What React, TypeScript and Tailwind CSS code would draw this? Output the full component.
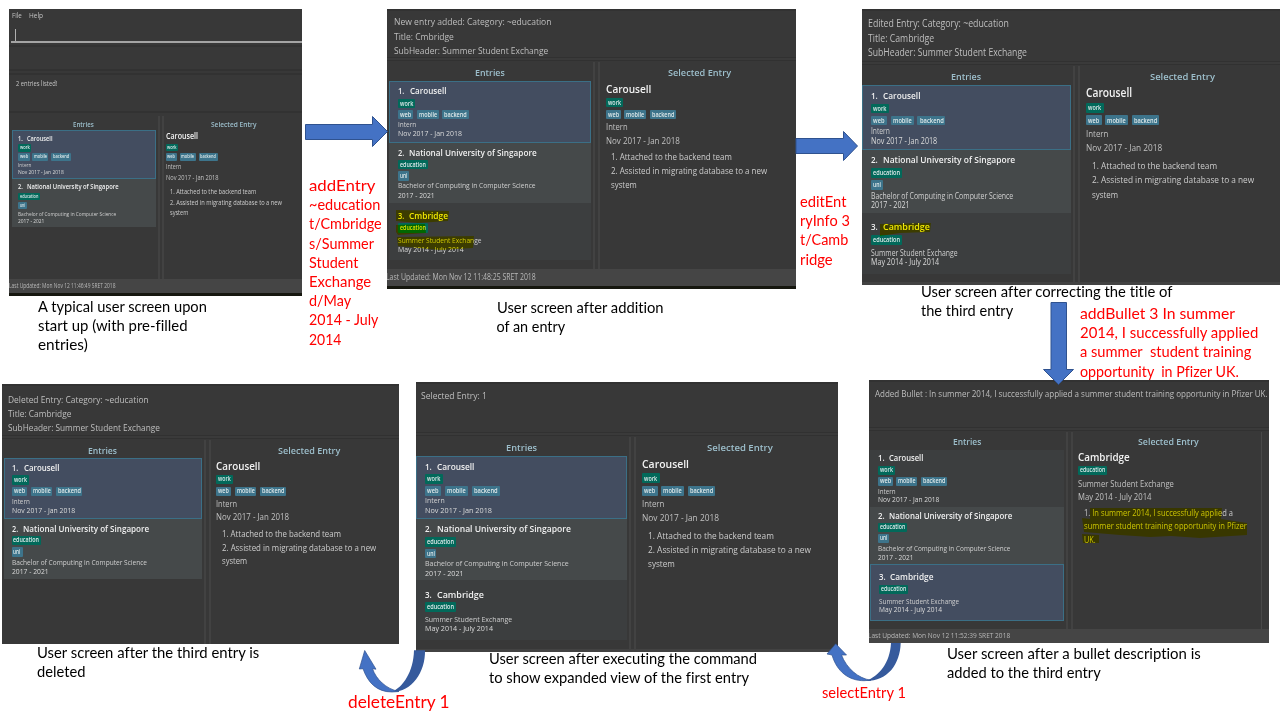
import { createContext, useContext, useLayoutEffect, useRef, useState } from "react";
import type { ReactNode } from "react";

/* Horizontal text scale of the window a label sits in. */
const TextScale = createContext(1);

/* One line of text, condensed or widened to fill a given width. */
function Fit({ w, children, className = "" }: { w: number; children: string; className?: string }) {
  const k = useContext(TextScale);
  const ref = useRef<HTMLSpanElement>(null);
  const [sx, setSx] = useState(1);
  useLayoutEffect(() => {
    if (ref.current) setSx((w * k) / ref.current.offsetWidth);
  }, [w, k]);
  return (
    <span className={`block shrink-0 whitespace-pre ${className}`} style={{ width: w * k }}>
      <span ref={ref} className="inline-block origin-left" style={{ transform: `scaleX(${sx})` }}>
        {children}
      </span>
    </span>
  );
}

function Tag({ w, green, children }: { w: number; green?: boolean; children: string }) {
  return (
    <span
      className={`flex h-[calc(var(--u)*9.4)] shrink-0 items-center rounded-[1px] px-[calc(var(--u)*2)] text-[length:calc(var(--u)*7)] font-semibold text-[#dfe9ea] ${
        green ? "bg-[#02695a]" : "bg-[#3d748b]"
      }`}
    >
      <Fit w={w - 4}>{children}</Fit>
    </span>
  );
}

const tagRow = "flex items-center gap-[calc(var(--u)*3.6)]";

type Entry = {
  no: string;
  title: [string, number];
  category: [string, number];
  tags: [string, number][];
  sub: [string, number];
  date: [string, number];
};

const carousell: Entry = {
  no: "1.",
  title: ["Carousell", 36],
  category: ["work", 17.3],
  tags: [["web", 15.3], ["mobile", 22], ["backend", 27]],
  sub: ["Intern", 18.5],
  date: ["Nov 2017 - Jan 2018", 64],
};
const nus: Entry = {
  no: "2.",
  title: ["National University of Singapore", 128],
  category: ["education", 30],
  tags: [["uni", 11.5]],
  sub: ["Bachelor of Computing in Computer Science", 137.5],
  date: ["2017 - 2021", 37],
};
const cambridge: Entry = {
  no: "3.",
  title: ["Cambridge", 45],
  category: ["education", 30],
  tags: [],
  sub: ["Summer Student Exchange", 83.5],
  date: ["May 2014 - July 2014", 65.5],
};
const cmbridge: Entry = { ...cambridge, title: ["Cmbridge", 39] };

function Item({ e, box, selected }: { e: Entry; box: string; selected?: boolean }) {
  const bg = selected
    ? "bg-[#434d60] outline-1 -outline-offset-1 outline-[#3b6f86]"
    : e.no === "2."
      ? "bg-[#45494a]"
      : "bg-[#3c3e3f]";
  return (
    <div className={`relative shrink-0 ${bg} ${box}`}>
      <div className="flex h-[calc(var(--u)*13)] items-center text-[length:calc(var(--u)*9.2)] font-semibold text-[#f0f0f0]">
        <Fit w={6.5} className="mr-[calc(var(--u)*5.2)]">{e.no}</Fit>
        <Fit w={e.title[1]}>{e.title[0]}</Fit>
      </div>
      <div className={`h-[calc(var(--u)*11.4)] ${tagRow}`}>
        <Tag w={e.category[1]} green>{e.category[0]}</Tag>
      </div>
      {e.tags.length > 0 ? (
        <div className={`h-[calc(var(--u)*11.4)] ${tagRow}`}>
          {e.tags.map(([t, w]) => (
            <Tag key={t} w={w}>{t}</Tag>
          ))}
        </div>
      ) : (
        <div className="h-[calc(var(--u)*2.2)]" />
      )}
      <div className="flex h-[calc(var(--u)*9.3)] items-center text-[length:calc(var(--u)*7.7)] text-[#cfcfcf]">
        <Fit w={e.sub[1]}>{e.sub[0]}</Fit>
      </div>
      <div className="flex h-[calc(var(--u)*9.3)] items-center text-[length:calc(var(--u)*7.7)] text-[#dadada]">
        <Fit w={e.date[1]}>{e.date[0]}</Fit>
      </div>
    </div>
  );
}

type DetailData = {
  title: [string, number];
  category: [string, number];
  tags: [string, number][];
  sub: [string, number];
  date: [string, number];
  lines: [string, number][];
};

const carousellDetail: DetailData = {
  title: ["Carousell", 45],
  category: ["work", 17],
  tags: [["web", 15], ["mobile", 22], ["backend", 26.5]],
  sub: ["Intern", 21.5],
  date: ["Nov 2017 - Jan 2018", 74],
  lines: [["1. Attached to the backend team", 120.5], ["2. Assisted in migrating database to a new", 156.5], ["system", 25.5]],
};
const cambridgeDetail: DetailData = {
  title: ["Cambridge", 53.5],
  category: ["education", 30],
  tags: [],
  sub: ["Summer Student Exchange", 99.5],
  date: ["May 2014 - July 2014", 76.5],
  lines: [["1. In summer 2014, I successfully applied a", 154.5], ["summer student training opportunity in Pfizer", 169.5], ["UK.", 12.5]],
};

function Detail({ d }: { d: DetailData }) {
  return (
    <>
      <div className="flex h-[calc(var(--u)*16)] items-center text-[length:calc(var(--u)*11.2)] font-semibold text-[#f2f2f2]">
        <Fit w={d.title[1]}>{d.title[0]}</Fit>
      </div>
      <div className={`h-[calc(var(--u)*12)] ${tagRow}`}>
        <Tag w={d.category[1]} green>{d.category[0]}</Tag>
      </div>
      {d.tags.length > 0 ? (
        <div className={`h-[calc(var(--u)*12)] ${tagRow}`}>
          {d.tags.map(([t, w]) => (
            <Tag key={t} w={w}>{t}</Tag>
          ))}
        </div>
      ) : (
        <div className="h-[calc(var(--u)*1.5)]" />
      )}
      <div className="text-[length:calc(var(--u)*8.9)] text-[#c0c0c0]">
        <div className="flex h-[calc(var(--u)*13.5)] items-center">
          <Fit w={d.sub[1]}>{d.sub[0]}</Fit>
        </div>
        <div className="flex h-[calc(var(--u)*14)] items-center">
          <Fit w={d.date[1]}>{d.date[0]}</Fit>
        </div>
        <div className="pt-[calc(var(--u)*3)] pl-[calc(var(--u)*5.7)] text-[#cccccc]">
          {d.lines.map(([t, w]) => (
            <div key={t} className="flex h-[calc(var(--u)*13.8)] items-center">
              <Fit w={w}>{t}</Fit>
            </div>
          ))}
        </div>
      </div>
    </>
  );
}

function Heading({ w, pad = "", children }: { w: number; pad?: string; children: string }) {
  return (
    <div className={`flex h-[calc(var(--u)*15)] shrink-0 items-center justify-center text-[length:calc(var(--u)*9.3)] font-semibold text-[#9dbfcc] ${pad}`}>
      <Fit w={w}>{children}</Fit>
    </div>
  );
}

type WindowProps = {
  k: number;
  box: string;
  header: ReactNode;
  left: string;
  items: ReactNode;
  right: string;
  headPad: string;
  detail: DetailData;
  footer?: ReactNode;
  gutter?: boolean;
};

function AppWindow({ k, box, header, left, items, right, headPad, detail, footer, gutter }: WindowProps) {
  return (
    <TextScale.Provider value={k}>
      <section className={`absolute flex flex-col overflow-hidden bg-[#383838] font-['Open_Sans','Noto_Sans',sans-serif] leading-none ${box}`}>
        {header}
        <div className="flex min-h-0 flex-1">
          <div className={`flex shrink-0 flex-col pt-[calc(var(--u)*3.5)] ${left}`}>
            <Heading w={29.5}>Entries</Heading>
            {items}
          </div>
          <div className="w-[calc(var(--u)*7)] shrink-0 border-x-2 border-[#424242]" />
          <div className={`flex min-w-0 flex-1 flex-col pt-[calc(var(--u)*3.5)] ${gutter ? "border-r border-[#484848]" : ""}`}>
            <Heading w={63} pad={headPad}>Selected Entry</Heading>
            <div className={right}>
              <Detail d={detail} />
            </div>
          </div>
          {gutter && <div className="w-[7px] shrink-0" />}
        </div>
        {footer}
      </section>
    </TextScale.Provider>
  );
}

function Messages({ box, lines }: { box: string; lines: [string, number][] }) {
  return (
    <div className={`relative shrink-0 border-t-2 border-[#323232] text-[length:calc(var(--u)*9.5)] text-[#bebebe] ${box}`}>
      {lines.map(([t, w]) => (
        <div key={t} className="flex h-[calc(var(--u)*14.2)] items-center">
          <Fit w={w}>{t}</Fit>
        </div>
      ))}
      <div className="absolute inset-x-0 bottom-[1px] h-[4px] border-y border-[#313131] bg-[#3a3a3a]" />
    </div>
  );
}

function Status({ w, box, children }: { w: number; box: string; children: string }) {
  return (
    <div className={`flex shrink-0 items-center bg-[#454545] text-[length:calc(var(--u)*8.2)] text-[#b8b8b8] ${box}`}>
      <Fit w={w}>{children}</Fit>
    </div>
  );
}

function Note({ box, lines }: { box: string; lines: [string, number][] }) {
  return (
    <div className={`absolute font-['Lato',sans-serif] [font-variant-ligatures:none] ${box}`}>
      {lines.map(([t, w]) => (
        <Fit key={t} w={w}>{t}</Fit>
      ))}
    </div>
  );
}

const caption = "text-[14.4px] leading-[19.2px] text-black";
const command = "text-[14.4px] leading-[19.2px] text-[#ff0000]";

export default function App() {
  return (
    <main className="relative h-[720px] w-[1280px] overflow-hidden bg-white">
      {/* Start-up */}
      <AppWindow
        k={0.714}
        box="left-[9px] top-[9px] h-[287px] w-[293px] [--u:0.79px]"
        header={
          <header className="flex h-[106.5px] shrink-0 flex-col text-[7.3px] text-[#c4c4c4]">
            <div className="flex h-[14px] items-center gap-[7px] pl-[3px]">
              <Fit w={14.3}>File</Fit>
              <Fit w={20}>Help</Fit>
            </div>
            <div className="ml-[2px] flex h-[20px] items-start border-b-2 border-[#a4a4a4] pt-[6px] pl-[4px]">
              <div className="h-[12px] w-px bg-[#b0b0b0]" />
            </div>
            <div className="mt-[2px] h-[26px] border-y-2 border-[#323232]" />
            <div className="mt-[2px] h-[40px] border-y-2 border-[#323232] pt-[5px] pl-[6.5px]">
              <Fit w={58}>2 entries listed!</Fit>
            </div>
          </header>
        }
        left="w-[149px] pl-[3px] pr-[2px]"
        items={
          <>
            <Item e={carousell} selected box="h-[49px] pl-[6.300px] pt-[3px]" />
            <Item e={nus} box="h-[48px] pl-[6px] pt-[2.7px]" />
          </>
        }
        right="pl-[2.3px]"
        headPad="pl-[2px]"
        detail={carousellDetail}
        footer={
          <>
            <Status w={149} box="h-[14px]">Last Updated: Mon Nov 12 11:46:49 SRET 2018</Status>
            <div className="h-[3px] shrink-0 bg-[#16170f]" />
          </>
        }
      />

      {/* After adding an entry */}
      <AppWindow
        k={1}
        box="left-[387px] top-[9px] h-[280px] w-[409px] [--u:1px]"
        header={
          <Messages
            box="h-[53px] pl-[7px] pt-[4px]"
            lines={[["New entry added: Category: ~education", 157.5], ["Title: Cmbridge", 60], ["SubHeader: Summer Student Exchange", 154]]}
          />
        }
        left="w-[206px] pl-[2px] pr-[2px]"
        items={
          <>
            <Item e={carousell} selected box="h-[62px] pl-[9px] pt-[4px]" />
            <Item e={nus} box="h-[60.5px] pl-[8.5px] pt-[3.3px]" />
            <Item e={cmbridge} box="h-[57px] pl-[8.5px] pt-[6.3px]" />
          </>
        }
        right="pl-[5.5px]"
        headPad="pl-[3px]"
        detail={carousellDetail}
        footer={
          <>
            <Status w={149.5} box="h-[17px] -ml-px">Last Updated: Mon Nov 12 11:48:25 SRET 2018</Status>
            <div className="h-[3px] shrink-0 bg-[#16170f]" />
          </>
        }
      />

      {/* After correcting the title */}
      <AppWindow
        k={1.035}
        box="left-[862px] top-[9px] h-[276px] w-[418px] [--u:1.042px]"
        header={
          <Messages
            box="h-[56.5px] pl-[5.5px] pt-[5.3px]"
            lines={[["Edited Entry: Category: ~education", 136.5], ["Title: Cambridge", 64], ["SubHeader: Summer Student Exchange", 153.5]]}
          />
        }
        left="w-[211px] pr-[2px]"
        items={
          <>
            <Item e={carousell} selected box="h-[65px] pl-[9.3px] pt-[4.3px]" />
            <Item e={nus} box="h-[63px] pl-[8.8px] pt-[3.7px]" />
            <Item e={cambridge} box="h-[61px] pl-[8.8px] pt-[7.5px]" />
          </>
        }
        right="pl-[5.7px]"
        headPad="pl-[5px]"
        detail={carousellDetail}
        footer={<div className="h-[3px] shrink-0 bg-[#424242]" />}
      />

      {/* After deleting the entry */}
      <AppWindow
        k={0.985}
        box="left-[2px] top-[384px] h-[260px] w-[397px] [--u:0.99px]"
        header={
          <Messages
            box="h-[55.5px] pl-[6px] pt-[6.500px]"
            lines={[["Deleted Entry: Category: ~education", 142.5], ["Title: Cambridge", 64], ["SubHeader: Summer Student Exchange", 154]]}
          />
        }
        left="w-[202px] pl-[1.5px] pr-[2px]"
        items={
          <>
            <Item e={carousell} selected box="h-[61px] pl-[8.5px] pt-[3.7px]" />
            <Item e={nus} box="h-[60px] pl-[8px] pt-[3.5px]" />
          </>
        }
        right="pl-[5.5px]"
        headPad="pl-[8px]"
        detail={carousellDetail}
      />

      {/* Expanded view of the first entry */}
      <AppWindow
        k={1.043}
        box="left-[416px] top-[382px] h-[270px] w-[422px] [--u:1.033px]"
        header={<Messages box="h-[54.5px] pl-[5px] pt-[4.5px]" lines={[["Selected Entry: 1", 63.5]]} />}
        left="w-[213px] pr-[2px]"
        items={
          <>
            <Item e={carousell} selected box="h-[63.5px] pl-[9.3px] pt-[4px]" />
            <Item e={nus} box="h-[61.3px] pl-[8.5px] pt-[3.4px]" />
            <Item e={cambridge} box="h-[59.3px] pl-[8.5px] pt-[7.2px]" />
          </>
        }
        right="pl-[5.7px]"
        headPad="pl-[5px]"
        detail={carousellDetail}
        footer={<div className="h-[3px] shrink-0 bg-[#424242]" />}
      />

      {/* Bullet added to the third entry */}
      <AppWindow
        k={0.963}
        box="left-[869px] top-[380px] h-[263px] w-[400px] [--u:0.955px]"
        header={
          <Messages
            box="h-[52px] pl-[6px] pt-[4.7px]"
            lines={[["Added Bullet : In summer 2014, I successfully applied a summer student training opportunity in Pfizer UK.", 407.5]]}
          />
        }
        left="w-[197px] pl-[1px] pr-[2px]"
        items={
          <>
            <Item e={carousell} box="h-[57.3px] pl-[8px] pt-[3px]" />
            <Item e={nus} box="h-[57.2px] pl-[8px] pt-[2.8px]" />
            <Item e={cambridge} selected box="h-[57px] pl-[8.8px] pt-[7.3px]" />
          </>
        }
        right="pl-[5.5px]"
        headPad="pl-[2px]"
        detail={cambridgeDetail}
        gutter
        footer={<Status w={148} box="h-[14px] -ml-px">Last Updated: Mon Nov 12 11:52:39 SRET 2018</Status>}
      />

      {/* Highlighter strokes */}
      <svg className="absolute inset-0 mix-blend-multiply" width="1280" height="720" fill="#fff700">
        <path d="M396 210L449 211L448 221L418 223L396 221Z" />
        <path d="M396 225L425 224L426 233L398 235L396 232Z" />
        <path d="M397 237L474 236L473 248L440 250L398 246Z" />
        <path d="M880 224L931 223L930 232L900 233L880 236Z" />
        <path d="M1090 508L1222 508L1221 519L1247 523L1247 535L1200 538L1171 536L1150 537L1120 535L1084 532L1082 518L1090 519Z" />
        <path d="M1082 534L1099 535L1099 543L1083 543Z" />
      </svg>

      {/* Flow arrows */}
      <svg className="absolute inset-0" width="1280" height="720" fill="#4472c4" stroke="#2f528f" strokeWidth="1">
        <path d="M305.5 124.5H372.5V116.5L387.5 131.5L372.5 146.5V139.5H305.5Z" />
        <path d="M796 138.5H843.5V131.5L857.5 146L843.5 160.5V153.5H796Z" />
        <path d="M1051 302.5H1066.5V369.5H1073.5L1058.5 384.5L1043.5 369.5H1051Z" />
        <path stroke="none" fill="#365a9c" d="M414 650.3H425C425.5 672 412 692 392 692C403 687 413.5 672 414 650.3Z" />
        <path strokeWidth=".7" d="M364.7 650.5L359.3 669L363 668.7C368 683 377 692 392 692L399 691.5C386 689 376 679 372.5 668.7L376 669.2Z" />
        <path stroke="none" fill="#365a9c" d="M891 643H900.7C900 664 888 681 866 681C879 676 890 663 891 643Z" />
        <path strokeWidth=".7" d="M835.7 643.8L827 654L832 655C837 672 849 680.7 864 680.7L871 680.2C858 678.5 846.500 668 841.5 655L846.500 655Z" />
      </svg>

      {/* Captions */}
      <Note box={`left-[38px] top-[297px] ${caption}`} lines={[["A typical user screen upon", 169], ["start up (with pre-filled", 150], ["entries)", 50]]} />
      <Note box={`left-[496.5px] top-[298px] ${caption}`} lines={[["User screen after addition", 167], ["of an entry", 69]]} />
      <Note box={`left-[920.5px] top-[282px] ${caption}`} lines={[["User screen after correcting the title of", 251], ["the third entry", 92]]} />
      <Note box={`left-[946.5px] top-[644px] ${caption}`} lines={[["User screen after a bullet description is", 254], ["added to the third entry", 154]]} />
      <Note box={`left-[488.5px] top-[649px] ${caption}`} lines={[["User screen after executing the command", 268], ["to show expanded view of the first entry", 260]]} />
      <Note box={`left-[36.5px] top-[643px] ${caption}`} lines={[["User screen after the third entry is", 222], ["deleted", 48]]} />

      {/* Commands */}
      <Note
        box={`left-[309px] top-[176px] ${command}`}
        lines={[["addEntry", 66.5], ["~education", 71.5], ["t/Cmbridge", 73], ["s/Summer", 65], ["Student", 49], ["Exchange", 62], ["d/May", 42], ["2014 - July", 69], ["2014", 32]]}
      />
      <Note box={`left-[800px] top-[192px] ${command}`} lines={[["editEnt", 46], ["ryInfo 3", 49.5], ["t/Camb", 48], ["ridge", 33]]} />
      <Note
        box={`left-[1080px] top-[304px] ${command}`}
        lines={[["addBullet 3 In summer", 155], ["2014, I successfully applied", 178], ["a summer  student training", 171], ["opportunity  in Pfizer UK.", 158.5]]}
      />
      <Note box="left-[348px] top-[691px] text-[16.600px] leading-[22px] text-[#ff0000]" lines={[["deleteEntry 1", 102]]} />
      <Note box={`left-[822px] top-[683px] ${command}`} lines={[["selectEntry 1", 83.5]]} />
    </main>
  );
}
